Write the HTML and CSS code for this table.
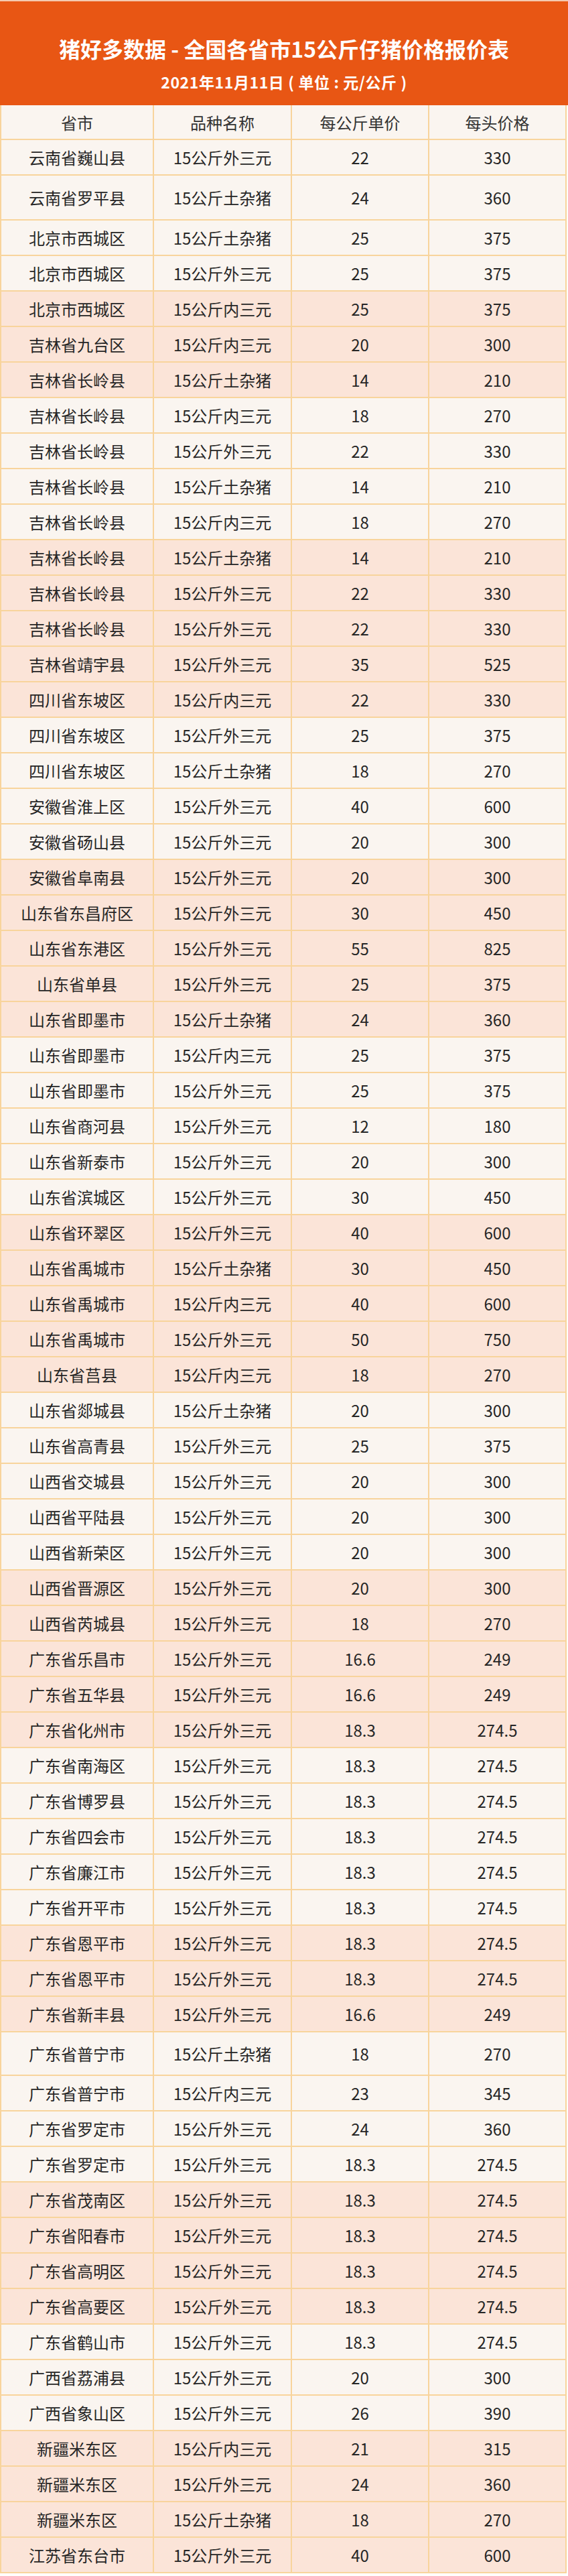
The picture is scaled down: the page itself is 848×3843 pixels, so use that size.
FILE: index.html
```html
<!DOCTYPE html>
<html lang="zh-CN">
<head>
<meta charset="utf-8">
<title>猪好多数据 - 全国各省市15公斤仔猪价格报价表</title>
<link rel="stylesheet" href="styles.css">
</head>
<body>
<div class="sheet">
  <header class="banner">
    <h1 class="title">猪好多数据 - 全国各省市15公斤仔猪价格报价表</h1>
    <p class="subtitle">2021年11月11日 ( 单位 : 元/公斤 )</p>
  </header>
  <div class="table">
    <div class="row head cream"><span>省市</span><span>品种名称</span><span>每公斤单价</span><span>每头价格</span></div>
    <div class="row cream"><span>云南省巍山县</span><span>15公斤外三元</span><span>22</span><span>330</span></div>
    <div class="row cream tall"><span>云南省罗平县</span><span>15公斤土杂猪</span><span>24</span><span>360</span></div>
    <div class="row cream"><span>北京市西城区</span><span>15公斤土杂猪</span><span>25</span><span>375</span></div>
    <div class="row cream"><span>北京市西城区</span><span>15公斤外三元</span><span>25</span><span>375</span></div>
    <div class="row pink"><span>北京市西城区</span><span>15公斤内三元</span><span>25</span><span>375</span></div>
    <div class="row pink"><span>吉林省九台区</span><span>15公斤内三元</span><span>20</span><span>300</span></div>
    <div class="row pink"><span>吉林省长岭县</span><span>15公斤土杂猪</span><span>14</span><span>210</span></div>
    <div class="row cream"><span>吉林省长岭县</span><span>15公斤内三元</span><span>18</span><span>270</span></div>
    <div class="row cream"><span>吉林省长岭县</span><span>15公斤外三元</span><span>22</span><span>330</span></div>
    <div class="row cream"><span>吉林省长岭县</span><span>15公斤土杂猪</span><span>14</span><span>210</span></div>
    <div class="row cream"><span>吉林省长岭县</span><span>15公斤内三元</span><span>18</span><span>270</span></div>
    <div class="row pink"><span>吉林省长岭县</span><span>15公斤土杂猪</span><span>14</span><span>210</span></div>
    <div class="row pink"><span>吉林省长岭县</span><span>15公斤外三元</span><span>22</span><span>330</span></div>
    <div class="row pink"><span>吉林省长岭县</span><span>15公斤外三元</span><span>22</span><span>330</span></div>
    <div class="row pink"><span>吉林省靖宇县</span><span>15公斤外三元</span><span>35</span><span>525</span></div>
    <div class="row pink"><span>四川省东坡区</span><span>15公斤内三元</span><span>22</span><span>330</span></div>
    <div class="row cream"><span>四川省东坡区</span><span>15公斤外三元</span><span>25</span><span>375</span></div>
    <div class="row cream"><span>四川省东坡区</span><span>15公斤土杂猪</span><span>18</span><span>270</span></div>
    <div class="row cream"><span>安徽省淮上区</span><span>15公斤外三元</span><span>40</span><span>600</span></div>
    <div class="row cream"><span>安徽省砀山县</span><span>15公斤外三元</span><span>20</span><span>300</span></div>
    <div class="row pink"><span>安徽省阜南县</span><span>15公斤外三元</span><span>20</span><span>300</span></div>
    <div class="row pink"><span>山东省东昌府区</span><span>15公斤外三元</span><span>30</span><span>450</span></div>
    <div class="row pink"><span>山东省东港区</span><span>15公斤外三元</span><span>55</span><span>825</span></div>
    <div class="row pink"><span>山东省单县</span><span>15公斤外三元</span><span>25</span><span>375</span></div>
    <div class="row pink"><span>山东省即墨市</span><span>15公斤土杂猪</span><span>24</span><span>360</span></div>
    <div class="row cream"><span>山东省即墨市</span><span>15公斤内三元</span><span>25</span><span>375</span></div>
    <div class="row cream"><span>山东省即墨市</span><span>15公斤外三元</span><span>25</span><span>375</span></div>
    <div class="row cream"><span>山东省商河县</span><span>15公斤外三元</span><span>12</span><span>180</span></div>
    <div class="row cream"><span>山东省新泰市</span><span>15公斤外三元</span><span>20</span><span>300</span></div>
    <div class="row cream"><span>山东省滨城区</span><span>15公斤外三元</span><span>30</span><span>450</span></div>
    <div class="row pink"><span>山东省环翠区</span><span>15公斤外三元</span><span>40</span><span>600</span></div>
    <div class="row pink"><span>山东省禹城市</span><span>15公斤土杂猪</span><span>30</span><span>450</span></div>
    <div class="row pink"><span>山东省禹城市</span><span>15公斤内三元</span><span>40</span><span>600</span></div>
    <div class="row pink"><span>山东省禹城市</span><span>15公斤外三元</span><span>50</span><span>750</span></div>
    <div class="row pink"><span>山东省莒县</span><span>15公斤内三元</span><span>18</span><span>270</span></div>
    <div class="row cream"><span>山东省郯城县</span><span>15公斤土杂猪</span><span>20</span><span>300</span></div>
    <div class="row cream"><span>山东省高青县</span><span>15公斤外三元</span><span>25</span><span>375</span></div>
    <div class="row cream"><span>山西省交城县</span><span>15公斤外三元</span><span>20</span><span>300</span></div>
    <div class="row cream"><span>山西省平陆县</span><span>15公斤外三元</span><span>20</span><span>300</span></div>
    <div class="row cream"><span>山西省新荣区</span><span>15公斤外三元</span><span>20</span><span>300</span></div>
    <div class="row pink"><span>山西省晋源区</span><span>15公斤外三元</span><span>20</span><span>300</span></div>
    <div class="row pink"><span>山西省芮城县</span><span>15公斤外三元</span><span>18</span><span>270</span></div>
    <div class="row pink"><span>广东省乐昌市</span><span>15公斤外三元</span><span>16.6</span><span>249</span></div>
    <div class="row pink"><span>广东省五华县</span><span>15公斤外三元</span><span>16.6</span><span>249</span></div>
    <div class="row pink"><span>广东省化州市</span><span>15公斤外三元</span><span>18.3</span><span>274.5</span></div>
    <div class="row cream"><span>广东省南海区</span><span>15公斤外三元</span><span>18.3</span><span>274.5</span></div>
    <div class="row cream"><span>广东省博罗县</span><span>15公斤外三元</span><span>18.3</span><span>274.5</span></div>
    <div class="row cream"><span>广东省四会市</span><span>15公斤外三元</span><span>18.3</span><span>274.5</span></div>
    <div class="row cream"><span>广东省廉江市</span><span>15公斤外三元</span><span>18.3</span><span>274.5</span></div>
    <div class="row cream"><span>广东省开平市</span><span>15公斤外三元</span><span>18.3</span><span>274.5</span></div>
    <div class="row pink"><span>广东省恩平市</span><span>15公斤外三元</span><span>18.3</span><span>274.5</span></div>
    <div class="row pink"><span>广东省恩平市</span><span>15公斤外三元</span><span>18.3</span><span>274.5</span></div>
    <div class="row pink"><span>广东省新丰县</span><span>15公斤外三元</span><span>16.6</span><span>249</span></div>
    <div class="row cream tall2"><span>广东省普宁市</span><span>15公斤土杂猪</span><span>18</span><span>270</span></div>
    <div class="row cream"><span>广东省普宁市</span><span>15公斤内三元</span><span>23</span><span>345</span></div>
    <div class="row cream"><span>广东省罗定市</span><span>15公斤外三元</span><span>24</span><span>360</span></div>
    <div class="row cream"><span>广东省罗定市</span><span>15公斤外三元</span><span>18.3</span><span>274.5</span></div>
    <div class="row pink"><span>广东省茂南区</span><span>15公斤外三元</span><span>18.3</span><span>274.5</span></div>
    <div class="row pink"><span>广东省阳春市</span><span>15公斤外三元</span><span>18.3</span><span>274.5</span></div>
    <div class="row pink"><span>广东省高明区</span><span>15公斤外三元</span><span>18.3</span><span>274.5</span></div>
    <div class="row pink"><span>广东省高要区</span><span>15公斤外三元</span><span>18.3</span><span>274.5</span></div>
    <div class="row cream"><span>广东省鹤山市</span><span>15公斤外三元</span><span>18.3</span><span>274.5</span></div>
    <div class="row cream"><span>广西省荔浦县</span><span>15公斤外三元</span><span>20</span><span>300</span></div>
    <div class="row cream"><span>广西省象山区</span><span>15公斤外三元</span><span>26</span><span>390</span></div>
    <div class="row pink"><span>新疆米东区</span><span>15公斤内三元</span><span>21</span><span>315</span></div>
    <div class="row pink"><span>新疆米东区</span><span>15公斤外三元</span><span>24</span><span>360</span></div>
    <div class="row pink"><span>新疆米东区</span><span>15公斤土杂猪</span><span>18</span><span>270</span></div>
    <div class="row pink"><span>江苏省东台市</span><span>15公斤外三元</span><span>40</span><span>600</span></div>
  </div>
</div>
</body>
</html>
```

FILE: styles.css
```css
html, body {
  margin: 0;
  padding: 0;
  background: #ffffff;
}

.sheet {
  width: 848px;
  font-family: "Noto Sans CJK SC", "Noto Sans", sans-serif;
}

.banner {
  height: 157px;
  box-sizing: border-box;
  background: #E85614;
  border-top: 2px solid #F4C9B0;
  color: #ffffff;
  display: flex;
  flex-direction: column;
  align-items: center;
  padding-top: 48px;
}

.title {
  margin: 0;
  font-size: 32px;
  line-height: 44px;
  font-weight: 700;
  letter-spacing: 0;
}

.subtitle {
  margin: 13px 0 0;
  font-size: 23px;
  line-height: 30px;
  font-weight: 700;
  letter-spacing: 0.6px;
}

.table {
  width: 846px;
  border-left: 2px solid #F8D49C;
  box-sizing: border-box;
}

.row {
  display: grid;
  grid-template-columns: 228px 206px 205px 205px;
  height: 53px;
  box-sizing: border-box;
  border-bottom: 2px solid #F8D49C;
}

.row.head {
  height: 52px;
}

.row.tall {
  height: 67px;
}

.row.tall2 {
  height: 65px;
}

.row span {
  display: flex;
  align-items: center;
  justify-content: center;
  border-right: 2px solid #F8D49C;
  font-size: 24px;
  color: #262626;
  white-space: nowrap;
}

.row.head span {
  color: #333333;
}

.cream {
  background: #FAF5F0;
}

.pink {
  background: #FBE4D8;
}
```
